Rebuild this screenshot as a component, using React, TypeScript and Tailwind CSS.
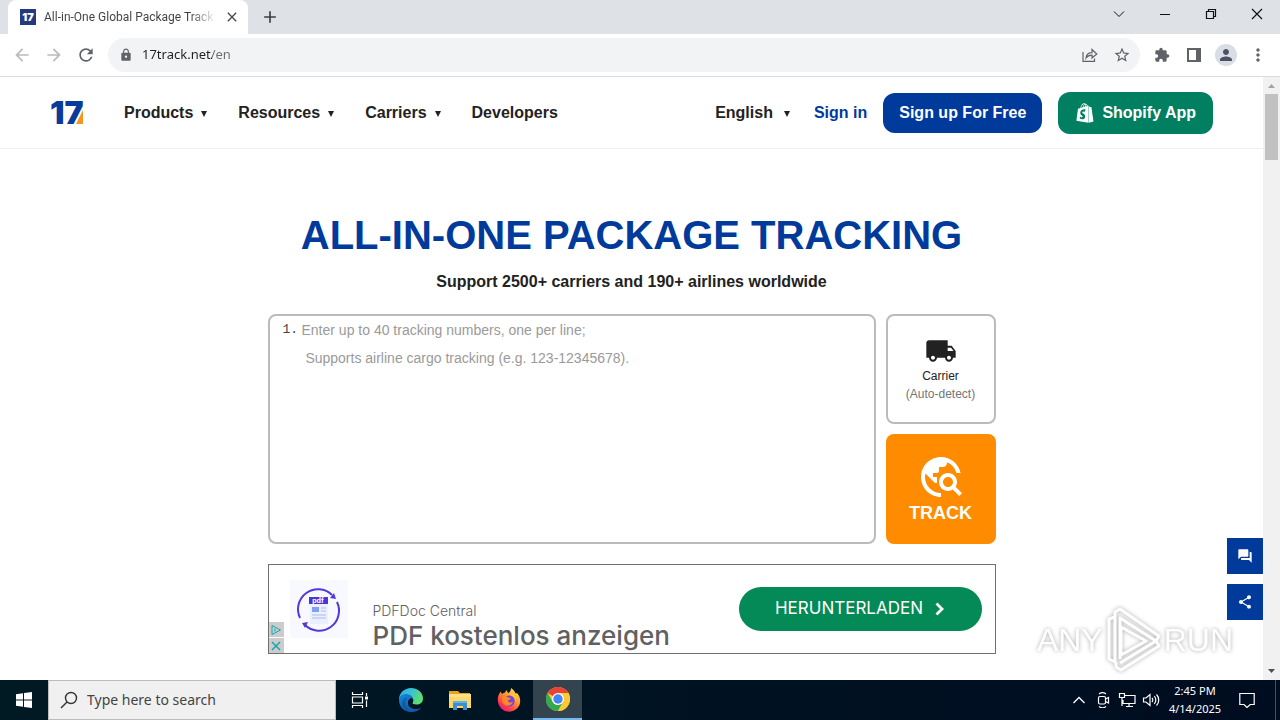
import React from "react";
import {
  MdArrowBack,
  MdArrowForward,
  MdClose,
  MdAdd,
  MdExtension,
  MdLocalShipping,
  MdLock,
  MdMoreVert,
  MdPerson,
  MdQuestionAnswer,
  MdRefresh,
  MdShare,
  MdStarBorder,
  MdTravelExplore,
} from "react-icons/md";
import { FaShopify } from "react-icons/fa";

const uiFont = "font-['Noto_Sans','Open_Sans',sans-serif]";

function Caret() {
  return (
    <svg viewBox="0 0 6 8" className="h-2 w-[6px]" aria-hidden="true">
      <path d="M0 2h6L3 8z" fill="currentColor" />
    </svg>
  );
}

function TabStrip() {
  return (
    <div className="flex h-[34px] shrink-0 bg-[#dee1e6] pl-2">
      <div className="flex w-60 items-center rounded-t-lg bg-white pl-3">
        <span className="flex size-4 shrink-0 items-center justify-center bg-[#24397f] font-[Inter,sans-serif] text-[11px] font-black text-white" aria-hidden="true">
          17
        </span>
        <span className="ml-2 w-[172px] whitespace-nowrap bg-linear-to-r from-[#3c4043] from-85% to-transparent bg-clip-text font-[Roboto,sans-serif] text-xs text-transparent">
          All-in-One Global Package Track
        </span>
        <button aria-label="Close tab" className="ml-2 text-[#45494d]">
          <MdClose className="size-4" />
        </button>
      </div>
      <button aria-label="New tab" className="ml-3 text-[#3c4043]">
        <MdAdd className="size-5" />
      </button>
      <div className="ml-auto flex h-7 text-[#111]">
        <button aria-label="Search tabs" className="grid w-[46px] place-items-center">
          <svg viewBox="0 0 12 12" className="size-3" fill="none" stroke="currentColor"><path d="M1 3.500l5 5 5-5" /></svg>
        </button>
        <button aria-label="Minimize" className="grid w-[46px] place-items-center">
          <svg viewBox="0 0 12 12" className="size-3" fill="none" stroke="currentColor"><path d="M1 6.500h10" /></svg>
        </button>
        <button aria-label="Restore" className="grid w-[46px] place-items-center">
          <svg viewBox="0 0 12 12" className="size-3" fill="none" stroke="currentColor" strokeWidth="1.200"><path d="M1.500 3.500h7v7h-7zM3.500 3.500v-2h7v7h-2" /></svg>
        </button>
        <button aria-label="Close" className="grid w-[46px] place-items-center">
          <svg viewBox="0 0 12 12" className="size-3" fill="none" stroke="currentColor" strokeWidth="1.200"><path d="M1 1l10 10M11 1L1 11" /></svg>
        </button>
      </div>
    </div>
  );
}

function Toolbar() {
  return (
    <div className="flex h-[43px] shrink-0 items-center border-b border-[#dadce0] bg-white px-[6px] text-[#5f6368]">
      <button aria-label="Back" className="grid size-8 place-items-center text-[#b8babd]"><MdArrowBack className="size-5" /></button>
      <button aria-label="Forward" className="grid size-8 place-items-center text-[#b8babd]"><MdArrowForward className="size-5" /></button>
      <button aria-label="Reload" className="grid size-8 place-items-center"><MdRefresh className="size-5" /></button>
      <div className="mx-[6px] flex h-[34px] flex-1 items-center rounded-full bg-[#f1f3f4] pr-[2px] pl-[11px]">
        <MdLock className="size-[14px] shrink-0" />
        <input
          aria-label="Address"
          defaultValue="17track.net/en"
          className="ml-[9px] min-w-0 flex-1 bg-linear-to-r from-[#202124] from-[70px] to-[#6b6f73] to-[70px] bg-clip-text text-[13px] text-transparent outline-none"
        />
        <button aria-label="Share this page" className="grid size-8 place-items-center">
          <svg viewBox="0 0 16 16" className="size-4" fill="none" stroke="currentColor" strokeWidth="1.200">
            <path d="M1 5v9.300h11.500V11.500M4 11c.5-3.800 2.800-5.300 6-5.300V2.500L14.800 7 10 11V8.200C7.500 8.200 5.500 9 4 11z" />
          </svg>
        </button>
        <button aria-label="Bookmark" className="grid size-8 place-items-center"><MdStarBorder className="size-[18px]" /></button>
      </div>
      <button aria-label="Extensions" className="grid size-8 place-items-center"><MdExtension className="size-4" /></button>
      <button aria-label="Side panel" className="grid size-8 place-items-center">
        <svg viewBox="0 0 14 14" className="size-[14px]"><path d="M0 0h14v14H0zM2 2v10h7V2z" fill="currentColor" fillRule="evenodd" /></svg>
      </button>
      <button aria-label="Profile" className="grid size-8 place-items-center">
        <span className="grid size-[22px] place-items-center rounded-full bg-[#dadde6] text-[#4c5264]"><MdPerson className="size-[18px]" /></span>
      </button>
      <button aria-label="Menu" className="grid size-8 place-items-center"><MdMoreVert className="size-5" /></button>
    </div>
  );
}

function SiteHeader() {
  return (
    <header className="flex h-[72px] shrink-0 items-center border-b border-[#f0f0f0] px-[50px] text-base font-bold text-[#222]">
      <a href="#home" aria-label="17TRACK" className="relative w-[34px] font-[Inter,sans-serif] text-[32px] leading-8 font-black text-[#0a3a9b]">
        17
        <svg viewBox="0 0 8 14" className="absolute right-0 bottom-[5px] h-[14px] w-2" aria-hidden="true"><path d="M7 0v14H0z" fill="#f7941d" /></svg>
      </a>
      <nav className="ml-10 flex gap-[31px]">
        {["Products", "Resources", "Carriers"].map((label) => (
          <button key={label} aria-haspopup="true" className="flex items-center gap-2">{label}<Caret /></button>
        ))}
        <a href="#developers">Developers</a>
      </nav>
      <div className="ml-auto flex items-center">
        <button aria-haspopup="true" className="flex items-center gap-[11px]">English<Caret /></button>
        <a href="#signin" className="ml-6 text-[#003a9b]">Sign in</a>
        <a href="#signup" className="ml-4 flex h-10 items-center rounded-xl bg-[#003a9b] px-4 text-white">Sign up For Free</a>
        <a href="#shopify" className="ml-4 flex h-[42px] items-center gap-[7px] rounded-xl bg-[#008060] px-[17px] text-white">
          <FaShopify className="size-5" />Shopify App
        </a>
      </div>
    </header>
  );
}

function PdfLogo() {
  return (
    <svg viewBox="0 0 58 58" className="size-[58px]" aria-hidden="true">
      <path d="M0 0h58v58H0z" fill="#f8f8ff" />
      <path d="M20 18h18v26H20z" fill="#eaf0ff" />
      <g fill="none" stroke="#5039d8" strokeWidth="2">
        <path d="M10 38A20 20 0 0 1 42 15M47 22A20 20 0 0 1 15 45" />
      </g>
      <path d="M46 19l-6-1 4-5zM12 43l6-1-3 6z" fill="#5039d8" />
      <path d="M19 17h19v7H19z" fill="#4936d8" />
      <text x="28" y="23" textAnchor="middle" fontSize="7" fontWeight="700" fontFamily="Inter, sans-serif" fill="#fff">pdf</text>
      <path d="M22 27h7v5h-7z" fill="#829ef0" />
      <path d="M31 28h5M31 31h5M22 35h14M22 38h14" stroke="#a9baf3" />
    </svg>
  );
}

function Advert() {
  return (
    <aside className="relative mt-5 flex h-[90px] items-center border border-[#6f6f6f] pr-[13px] pl-[21px] font-[Inter,sans-serif]">
      <PdfLogo />
      <div className="mt-[34px] ml-[25px] text-[#5f6163]">
        <p className="text-sm leading-5 font-light">PDFDoc Central</p>
        <p className="text-[26px] leading-[30px] font-medium">PDF kostenlos anzeigen</p>
      </div>
      <a href="#download" className="ml-auto flex h-11 w-[243px] items-center justify-center gap-3 rounded-full bg-[#048a56] text-[17px] text-white">
        HERUNTERLADEN
        <svg viewBox="0 0 10 14" className="h-[14px] w-[10px]" fill="none" stroke="currentColor" strokeWidth="2.800" aria-hidden="true"><path d="M1.500 1.500L7 7l-5.500 5.500" /></svg>
      </a>
      <div className="absolute bottom-0 left-0 flex flex-col gap-px text-[#13a6b5]">
        <button aria-label="Ad choices" className="grid size-[15px] place-items-center bg-[#ccc]">
          <svg viewBox="0 0 12 12" className="size-3" fill="none" stroke="currentColor"><path d="M2 1.500l8.500 4.500L2 10.500zM5 4.500v3" /></svg>
        </button>
        <button aria-label="Close ad" className="grid size-[15px] place-items-center bg-[#ccc]">
          <svg viewBox="0 0 12 12" className="size-3" fill="none" stroke="currentColor" strokeWidth="1.500"><path d="M2 2l8 8M10 2l-8 8" /></svg>
        </button>
      </div>
    </aside>
  );
}

function Hero() {
  return (
    <section className="mx-auto w-[728px] max-w-full pt-16">
      <h1 className="text-center text-[40px] leading-[44px] font-bold whitespace-nowrap text-[#003a9b]">ALL-IN-ONE PACKAGE TRACKING</h1>
      <p className="mt-[13px] text-center text-base leading-6 font-bold text-[#222]">Support 2500+ carriers and 190+ airlines worldwide</p>
      <form className="mt-5 flex gap-[10px]">
        <div className="flex h-[230px] flex-1 rounded-lg border-2 border-[#bbb] pl-[13px]">
          <span className="w-[18px] font-['Liberation_Mono',monospace] text-[13px] leading-7 text-[#444]">1.</span>
          <textarea
            aria-label="Tracking numbers"
            placeholder={"Enter up to 40 tracking numbers, one per line;\n Supports airline cargo tracking (e.g. 123-12345678)."}
            className="ml-px flex-1 resize-none text-sm leading-7 outline-none placeholder:text-[#9a9a9a]"
          />
        </div>
        <div className="flex w-[110px] flex-col gap-[10px]">
          <button type="button" className="flex h-[110px] flex-col items-center justify-center rounded-lg border-2 border-[#bbb] text-xs text-[#222]">
            <MdLocalShipping className="size-8" />
            <span className="leading-[18px]">Carrier</span>
            <span className="leading-[18px] text-[#757575]">(Auto-detect)</span>
          </button>
          <button type="button" className="flex h-[110px] flex-col items-center justify-center rounded-lg bg-[#ff8c00] text-lg font-bold text-white">
            <MdTravelExplore className="size-12" />
            <span className="leading-6">TRACK</span>
          </button>
        </div>
      </form>
      <Advert />
    </section>
  );
}

function Watermark() {
  return (
    <div
      className="pointer-events-none absolute right-[30px] bottom-[7px] flex items-center gap-[2px] font-['Liberation_Sans',sans-serif] text-[32px] leading-none text-white drop-shadow-[0_0_2px_#aaa]"
    >
      <span>ANY</span>
      <svg viewBox="0 0 57 66" className="h-[66px] w-[57px]" fill="none" stroke="currentColor" strokeWidth="3" strokeLinejoin="round" aria-hidden="true">
        <path d="M16 20v28l25-14z" />
        <path d="M10 10L4 12v40l6 3zM10 10V5l5-3 39 27-3 5L15 11v41M15 56l36-22 3 5-38 24-5-3v-5" />
      </svg>
      <span>RUN</span>
    </div>
  );
}

function Scrollbar() {
  return (
    <div className="flex w-[17px] shrink-0 flex-col items-center bg-[#f1f1f1]" aria-hidden="true">
      <svg viewBox="0 0 17 17" className="size-[17px]"><path d="M5 11l3.500-4 3.500 4z" fill="#a3a3a3" /></svg>
      <div className="h-[66px] w-[13px] bg-[#c1c1c1]" />
      <svg viewBox="0 0 17 17" className="mt-auto size-[17px]"><path d="M5 6l3.500 4L12 6z" fill="#505050" /></svg>
    </div>
  );
}

function EdgeIcon() {
  return (
    <svg viewBox="0 0 24 24" className="size-6" aria-hidden="true">
      <defs>
        <linearGradient id="edgeTop" x1="0" y1="0" x2="1" y2=".4"><stop offset="0" stopColor="#2eb0e8" /><stop offset=".5" stopColor="#35c1d8" /><stop offset="1" stopColor="#5fdc70" /></linearGradient>
        <linearGradient id="edgeBody" x1="0" y1="0" x2=".7" y2="1"><stop offset="0" stopColor="#1686d9" /><stop offset="1" stopColor="#0f58a8" /></linearGradient>
      </defs>
      <path d="M0 11.500C0 5 5.500 0 12 0s12 4.500 12 10.500c0 4-3 6-6.500 6-3 0-4.500-1-4.200-2 .9-1 1-2 .7-3C13 7 4 5.500 0 11.500z" fill="url(#edgeTop)" />
      <path d="M0 12c0-4 4-6 7-6 4 0 7 2.500 7 5-2-1.500-5 .5-5 4 0 4 4 6 8 6 2.500 0 4-.8 5.200-1.600C20 22.500 16.500 24 12 24 5 24 0 18.500 0 12z" fill="url(#edgeBody)" />
      <path d="M8.500 9.500C5 12 6 19.500 11.500 23c-6 .5-10-5-8-10 1-2.500 3-3.700 5-3.500z" fill="#0c4a94" opacity=".55" />
      <path d="M14 11c-2.500-1.500-5 .5-5 4 0 1.500.5 2.500 1.500 3.500l3-3.500c.8-1.200 1-2.500.5-4z" fill="#001826" />
    </svg>
  );
}

function FolderIcon() {
  return (
    <svg viewBox="0 0 24 24" className="size-6" aria-hidden="true">
      <path d="M1 3h9l2 2h10v5H1z" fill="#e8a317" />
      <path d="M1 6h22v14H1z" fill="#ffd766" />
      <path d="M1 6h22v3H1z" fill="#fbe08c" />
      <path d="M5 13h14v9h-4v-4H9v4H5z" fill="#3a8fd1" />
      <path d="M5 13h14v2H5z" fill="#62b3ea" />
    </svg>
  );
}

function FirefoxIcon() {
  return (
    <svg viewBox="0 0 24 24" className="size-6" aria-hidden="true">
      <defs>
        <linearGradient id="foxFlame" x1=".9" y1="0" x2=".2" y2="1"><stop offset="0" stopColor="#fff04a" /><stop offset=".45" stopColor="#ff9430" /><stop offset=".8" stopColor="#ff3350" /><stop offset="1" stopColor="#e31587" /></linearGradient>
      </defs>
      <path d="M14 0c3 2 4 4 4.500 5.500L20 5c3 3 4 7.500 2.500 12A11.300 11.300 0 0 1 1 14C0 9.500 2 6 3.500 3.500L5 6c1-1 2-1.500 3-1.500L9.500 2l1.500 3c2-.5 3-2.500 3-5z" fill="url(#foxFlame)" />
      <circle cx="12.200" cy="13" r="5.500" fill="#7542e5" />
      <path d="M5 9c3-1.500 5-.5 6 .5l3 .5c-.5 1.500-2 1.500-3 2.500 0 2 3 3 5 1-1 4-5 5-8 3.500C5.500 15.500 4.500 12 5 9z" fill="#ff8a22" />
      <path d="M13 7c3 0 6 3 5 7 2-4 0-8-4-9z" fill="#ffce3a" />
    </svg>
  );
}

function ChromeIcon() {
  return (
    <svg viewBox="0 0 24 24" className="size-6" aria-hidden="true">
      <circle cx="12" cy="12" r="12" fill="#fcc934" />
      <path d="M12 12L1.600 6A12 12 0 0 1 22.400 6H12z" fill="#ea4335" />
      <path d="M12 24A12 12 0 0 1 1.600 6l5.200 9c1 1.700 3 3 5.200 3l5.200-3z" fill="#34a853" />
      <path d="M22.400 6A12 12 0 0 1 12 24l5.200-9c1-2 1-4-.2-6l-5-3z" fill="#fcc934" />
      <circle cx="12" cy="12" r="6" fill="#fff" />
      <circle cx="12" cy="12" r="4.700" fill="#4285f4" />
    </svg>
  );
}

function Taskbar() {
  return (
    <footer className="flex h-10 shrink-0 bg-linear-to-r from-[#001a24] to-[#000c20] text-white">
      <button aria-label="Start" className="grid w-12 place-items-center">
        <svg viewBox="0 0 16 16" className="size-4" fill="currentColor"><path d="M0 2.200l7-1v6.300H0zM8 1l8-1v7.500H8zM0 8.500h7v6.300l-7-1zM8 8.500h8V16l-8-1z" /></svg>
      </button>
      <label className="flex w-72 items-center border border-[#bcbcbc] bg-[#f0f0f0] pl-[11px] text-[#333]">
        <svg viewBox="0 0 18 18" className="size-[18px]" fill="none" stroke="currentColor" strokeWidth="1.400"><circle cx="11" cy="7" r="5.500" /><path d="M7 11l-6 6" /></svg>
        <input aria-label="Search" placeholder="Type here to search" className="ml-[9px] min-w-0 flex-1 text-sm outline-none placeholder:text-[#444]" />
      </label>
      <button aria-label="Task view" className="grid w-12 place-items-center">
        <svg viewBox="0 0 18 16" className="h-4 w-[18px]" fill="none" stroke="currentColor" strokeWidth="1.200"><path d="M1.500 0v2.500h10V0M1.500 16v-2.500h10V16M1.500 5h10v6h-10zM15.500 1v3M15.500 8.500V15" /><path d="M14 4.500h3v3h-3z" fill="currentColor" stroke="none" /></svg>
      </button>
      <div className="flex pl-[3px]">
        <button aria-label="Microsoft Edge" className="grid w-12 place-items-center"><EdgeIcon /></button>
        <button aria-label="File Explorer" className="grid w-[49px] place-items-center"><FolderIcon /></button>
        <button aria-label="Firefox" className="grid w-[49px] place-items-center"><FirefoxIcon /></button>
        <button aria-label="Google Chrome" className="grid w-[49px] place-items-center border-b-2 border-[#76b9ed] bg-[#34444e]"><ChromeIcon /></button>
      </div>
      <div className="ml-auto flex items-center">
        <button aria-label="Show hidden icons" className="grid w-6 place-items-center">
          <svg viewBox="0 0 12 8" className="h-2 w-3" fill="none" stroke="currentColor" strokeWidth="1.300"><path d="M.5 7L6 1.500 11.500 7" /></svg>
        </button>
        <button aria-label="Meet now" className="grid w-6 place-items-center">
          <svg viewBox="0 0 16 16" className="size-4" fill="none" stroke="currentColor" strokeWidth="1.200"><rect x="3.500" y="4.500" width="7" height="7.500" rx="1.500" /><path d="M10.500 7l3-1.500v5.500l-3-1.500M4 2c2-1.500 5-1.500 7 0M4 14.500c2 1.500 5 1.500 7 0" /></svg>
        </button>
        <button aria-label="Network" className="grid w-6 place-items-center">
          <svg viewBox="0 0 18 16" className="h-4 w-[18px]" fill="none" stroke="currentColor" strokeWidth="1.200"><path d="M7 3.500h10v8H5V8M1.500 1.500h5v4h-5zM4 5.500V14M8 14.500h7M11 11.500v3" /></svg>
        </button>
        <button aria-label="Volume" className="grid w-6 place-items-center">
          <svg viewBox="0 0 18 16" className="h-4 w-[18px]" fill="none" stroke="currentColor" strokeWidth="1.200"><path d="M1.500 6h2.500l4-3.500v11L4 10H1.500zM10 6c1 1 1 3 0 4M12.300 4.200c2 2 2 5.600 0 7.600M14.500 2.500c3 3 3 8 0 11" /></svg>
        </button>
        <div className="w-16 text-center text-[11px] leading-[18px]">
          <div>2:45 PM</div>
          <div>4/14/2025</div>
        </div>
        <button aria-label="Notifications" className="grid w-10 place-items-center">
          <svg viewBox="0 0 16 16" className="size-4" fill="none" stroke="currentColor" strokeWidth="1.200"><path d="M.8 1.500h14.400v11h-4L8 15.500l-3-3H.8z" /></svg>
        </button>
        <div className="ml-2 h-10 w-[5px] border-l border-[#47505f]" />
      </div>
    </footer>
  );
}

export default function App() {
  return (
    <div className={`flex h-screen flex-col overflow-hidden bg-white ${uiFont}`}>
      <TabStrip />
      <Toolbar />
      <div className="flex min-h-0 flex-1 font-['Liberation_Sans',Arial,sans-serif]">
        <main className="relative flex min-w-0 flex-1 flex-col overflow-hidden">
          <SiteHeader />
          <Hero />
          <div className="absolute right-0 bottom-[60px] flex flex-col gap-[10px] text-white">
            <button aria-label="Feedback" className="grid size-9 place-items-center bg-[#003a9b]"><MdQuestionAnswer className="size-4" /></button>
            <button aria-label="Share" className="grid size-9 place-items-center bg-[#003a9b]"><MdShare className="size-4" /></button>
          </div>
          <Watermark />
        </main>
        <Scrollbar />
      </div>
      <Taskbar />
    </div>
  );
}
